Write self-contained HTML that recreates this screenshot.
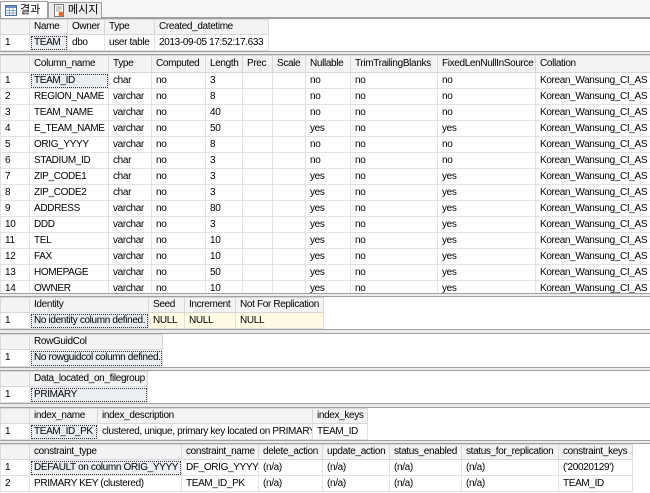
<!DOCTYPE html>
<html><head><meta charset="utf-8"><style>
*{margin:0;padding:0;box-sizing:border-box}
body{width:650px;height:492px;background:#ebebeb;position:relative;overflow:hidden;font-family:"Liberation Sans","Noto Sans CJK KR",sans-serif;font-size:10px;letter-spacing:-0.35px;color:#000}
.tabs{position:absolute;left:0;top:0;width:650px;height:18px;background:#f7f7f7;border-bottom:1px solid #a0a0a0}
.tab{position:absolute;top:1px;height:18px;font-size:11px;letter-spacing:0;line-height:16px;padding-left:19px;white-space:nowrap}
.t1{left:0;width:48px;background:#fff;border:1px solid #a0a0a0;border-bottom:none}
.t2{left:48px;width:54px;background:#ececec;border:1px solid #a0a0a0;border-bottom:none;top:2px;height:16px;line-height:14px}
.panel{position:absolute;left:0;width:650px;background:#fff;border-top:1px solid #a0a0a0;border-bottom:1px solid #a0a0a0;overflow:hidden}
table{border-collapse:collapse;table-layout:fixed;position:absolute;left:0;top:0}
td{border:1px solid #e2e2e2;white-space:nowrap;overflow:hidden;padding:0 0 0 4px;height:16px;line-height:14px}
tr.h td{background:#f3f3f3;border:1px solid #d8d8d8;height:15px}
td.n{background:#fff}
td.sel{background:#ebeef3;outline:1px dotted #333;outline-offset:-2px}
.y td.yl{background:#fffbe5}
</style></head><body>
<div class="tabs">
<div class="tab t1"><svg style="position:absolute;left:4px;top:3px" width="12" height="11"><rect x=".5" y=".5" width="11" height="10" fill="#fff" stroke="#4a6fa5"/><rect x="1" y="1" width="10" height="2" fill="#6d8fc4"/><path d="M1 5.5h10M1 8h10M4.5 3v7M8 3v7" stroke="#8aa5cc"/></svg>결과</div>
<div class="tab t2"><svg style="position:absolute;left:4px;top:1px" width="12" height="13"><rect x="1.5" y=".5" width="9" height="12" fill="#fff" stroke="#777"/><path d="M3 3h6M3 5h6M3 7h4" stroke="#999"/><circle cx="8" cy="10" r="2.5" fill="#e46b2a"/></svg>메시지</div>
</div>

<div class="panel" style="top:18px;height:34px">
<table style="width:268px"><col width="29"><col width="38"><col width="37"><col width="50"><col width="114">
<tr class="h"><td></td><td>Name</td><td>Owner</td><td>Type</td><td>Created_datetime</td></tr>
<tr><td class="n">1</td><td class="sel">TEAM</td><td>dbo</td><td>user table</td><td>2013-09-05 17:52:17.633</td></tr>
</table></div>

<div class="panel" style="top:54px;height:240px">
<table style="width:650px"><col width="29"><col width="79"><col width="43"><col width="54"><col width="37"><col width="30"><col width="33"><col width="45"><col width="87"><col width="98"><col width="115">
<tr class="h" style="height:17px"><td></td><td>Column_name</td><td>Type</td><td>Computed</td><td>Length</td><td>Prec</td><td>Scale</td><td>Nullable</td><td>TrimTrailingBlanks</td><td>FixedLenNullInSource</td><td>Collation</td></tr>
<tr style="height:15.7px"><td class="n">1</td><td class="sel">TEAM_ID</td><td>char</td><td>no</td><td>3</td><td></td><td></td><td>no</td><td>no</td><td>no</td><td>Korean_Wansung_CI_AS</td></tr>
<tr style="height:15.7px"><td class="n">2</td><td>REGION_NAME</td><td>varchar</td><td>no</td><td>8</td><td></td><td></td><td>no</td><td>no</td><td>no</td><td>Korean_Wansung_CI_AS</td></tr>
<tr style="height:15.7px"><td class="n">3</td><td>TEAM_NAME</td><td>varchar</td><td>no</td><td>40</td><td></td><td></td><td>no</td><td>no</td><td>no</td><td>Korean_Wansung_CI_AS</td></tr>
<tr style="height:15.7px"><td class="n">4</td><td>E_TEAM_NAME</td><td>varchar</td><td>no</td><td>50</td><td></td><td></td><td>yes</td><td>no</td><td>yes</td><td>Korean_Wansung_CI_AS</td></tr>
<tr style="height:15.7px"><td class="n">5</td><td>ORIG_YYYY</td><td>varchar</td><td>no</td><td>8</td><td></td><td></td><td>no</td><td>no</td><td>no</td><td>Korean_Wansung_CI_AS</td></tr>
<tr style="height:15.7px"><td class="n">6</td><td>STADIUM_ID</td><td>char</td><td>no</td><td>3</td><td></td><td></td><td>no</td><td>no</td><td>no</td><td>Korean_Wansung_CI_AS</td></tr>
<tr style="height:15.7px"><td class="n">7</td><td>ZIP_CODE1</td><td>char</td><td>no</td><td>3</td><td></td><td></td><td>yes</td><td>no</td><td>yes</td><td>Korean_Wansung_CI_AS</td></tr>
<tr style="height:15.7px"><td class="n">8</td><td>ZIP_CODE2</td><td>char</td><td>no</td><td>3</td><td></td><td></td><td>yes</td><td>no</td><td>yes</td><td>Korean_Wansung_CI_AS</td></tr>
<tr style="height:15.7px"><td class="n">9</td><td>ADDRESS</td><td>varchar</td><td>no</td><td>80</td><td></td><td></td><td>yes</td><td>no</td><td>yes</td><td>Korean_Wansung_CI_AS</td></tr>
<tr style="height:15.7px"><td class="n">10</td><td>DDD</td><td>varchar</td><td>no</td><td>3</td><td></td><td></td><td>yes</td><td>no</td><td>yes</td><td>Korean_Wansung_CI_AS</td></tr>
<tr style="height:15.7px"><td class="n">11</td><td>TEL</td><td>varchar</td><td>no</td><td>10</td><td></td><td></td><td>yes</td><td>no</td><td>yes</td><td>Korean_Wansung_CI_AS</td></tr>
<tr style="height:15.7px"><td class="n">12</td><td>FAX</td><td>varchar</td><td>no</td><td>10</td><td></td><td></td><td>yes</td><td>no</td><td>yes</td><td>Korean_Wansung_CI_AS</td></tr>
<tr style="height:15.7px"><td class="n">13</td><td>HOMEPAGE</td><td>varchar</td><td>no</td><td>50</td><td></td><td></td><td>yes</td><td>no</td><td>yes</td><td>Korean_Wansung_CI_AS</td></tr>
<tr style="height:15.7px"><td class="n">14</td><td>OWNER</td><td>varchar</td><td>no</td><td>10</td><td></td><td></td><td>yes</td><td>no</td><td>yes</td><td>Korean_Wansung_CI_AS</td></tr>
</table></div>

<div class="panel" style="top:296px;height:34px">
<table style="width:323px"><col width="29"><col width="119"><col width="36"><col width="51"><col width="88">
<tr class="h"><td></td><td>Identity</td><td>Seed</td><td>Increment</td><td>Not For Replication</td></tr>
<tr class="y"><td class="n">1</td><td class="sel">No identity column defined.</td><td class="yl">NULL</td><td class="yl">NULL</td><td class="yl">NULL</td></tr>
</table></div>

<div class="panel" style="top:333px;height:35px">
<table style="width:162px"><col width="29"><col width="133">
<tr class="h"><td></td><td>RowGuidCol</td></tr>
<tr style="height:17px"><td class="n">1</td><td class="sel">No rowguidcol column defined.</td></tr>
</table></div>

<div class="panel" style="top:370px;height:34px">
<table style="width:147px"><col width="29"><col width="118">
<tr class="h"><td></td><td>Data_located_on_filegroup</td></tr>
<tr><td class="n">1</td><td class="sel">PRIMARY</td></tr>
</table></div>

<div class="panel" style="top:407px;height:34px">
<table style="width:367px"><col width="29"><col width="68"><col width="215"><col width="55">
<tr class="h"><td></td><td>index_name</td><td>index_description</td><td>index_keys</td></tr>
<tr><td class="n">1</td><td class="sel">TEAM_ID_PK</td><td>clustered, unique, primary key located on PRIMARY</td><td>TEAM_ID</td></tr>
</table></div>

<div class="panel" style="top:443px;height:50px;border-bottom:none">
<table style="width:632px"><col width="29"><col width="152"><col width="77"><col width="64"><col width="67"><col width="72"><col width="97"><col width="74">
<tr class="h"><td></td><td>constraint_type</td><td>constraint_name</td><td>delete_action</td><td>update_action</td><td>status_enabled</td><td>status_for_replication</td><td>constraint_keys</td></tr>
<tr><td class="n">1</td><td class="sel">DEFAULT on column ORIG_YYYY</td><td>DF_ORIG_YYYY</td><td>(n/a)</td><td>(n/a)</td><td>(n/a)</td><td>(n/a)</td><td>('20020129')</td></tr>
<tr><td class="n">2</td><td>PRIMARY KEY (clustered)</td><td>TEAM_ID_PK</td><td>(n/a)</td><td>(n/a)</td><td>(n/a)</td><td>(n/a)</td><td>TEAM_ID</td></tr>
</table></div>
</body></html>
